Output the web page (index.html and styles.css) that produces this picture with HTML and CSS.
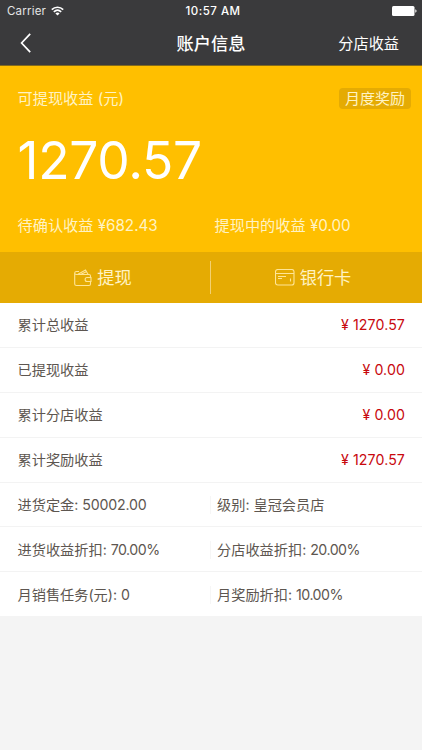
FILE: index.html
```html
<!DOCTYPE html>
<html lang="zh-CN">
<head>
<meta charset="utf-8">
<title>账户信息</title>
<link rel="stylesheet" href="styles.css">
</head>
<body>
<header class="top">
  <div class="status">
    <div class="carrier"><span>Carrier</span>
      <svg width="13" height="10" viewBox="0 0 13 10" fill="none" stroke="#fff" stroke-width="1.6"><path d="M.8 3.600C4 .4 9 .4 12.200 3.600M2.800 5.900C5 3.800 8 3.800 10.200 5.900"/><path d="M6.500 9.400L4.400 7.400C5.600 6.300 7.400 6.300 8.600 7.400Z" fill="#fff" stroke="none"/></svg>
    </div>
    <span class="clock">10:57 AM</span>
    <svg class="battery" width="25" height="10" viewBox="0 0 25 10" fill="#fff"><rect width="22.500" height="10" rx="1.500"/><path d="M23.300 3.300C25 3.800 25 6.200 23.300 6.700Z"/></svg>
  </div>
  <nav class="nav">
    <svg class="back" width="12" height="20" viewBox="0 0 12 20" fill="none" stroke="#fff" stroke-width="1.700"><path d="M10.200 .8L1.600 10L10.200 19.200"/></svg>
    <h1 class="title">账户信息</h1>
    <a class="branch">分店收益</a>
  </nav>
</header>
<section class="summary">
  <div class="summary-head"><span>可提现收益 (元)</span><span class="reward">月度奖励</span></div>
  <div class="amount">1270.57</div>
  <div class="pending"><span>待确认收益 ¥682.43</span><span>提现中的收益 ¥0.00</span></div>
</section>
<div class="actions">
  <a class="action">
    <svg width="18" height="18" viewBox="0 0 18 18" fill="none" stroke="#ffe596" stroke-width="1.100"><path d="M5 2.500H2.500Q.7 2.500 .7 4T2.500 5.500H15Q16.500 5.500 16.500 7V8.500M16.500 12.500V15Q16.500 16.500 15 16.500H2.500Q.7 16.500 .7 15V4M4 5.200L11.500 1L14 5.200M7 5.200L12.300 2.800M17 8.500H13C10.500 8.500 10.500 12.500 13 12.500H17Z"/></svg>
    <span>提现</span>
  </a>
  <a class="action card">
    <svg width="20" height="17" viewBox="0 0 20 17" fill="none" stroke="#ffe596" stroke-width="1.100"><rect x=".5" y=".5" width="18.500" height="15.500" rx="2.300"/><path d="M.6 4.500H19M3 7.500H11M3 9.500H7M15.500 9.500V12.500"/></svg>
    <span>银行卡</span>
  </a>
</div>
<main class="list">
  <div class="row"><span>累计总收益</span><span class="money">¥ 1270.57</span></div>
  <div class="row"><span>已提现收益</span><span class="money">¥ 0.00</span></div>
  <div class="row"><span>累计分店收益</span><span class="money">¥ 0.00</span></div>
  <div class="row"><span>累计奖励收益</span><span class="money">¥ 1270.57</span></div>
  <div class="row pair short"><span>进货定金: <span class="num">50002.00</span></span><span class="cell">级别: 皇冠会员店</span></div>
  <div class="row pair"><span>进货收益折扣: <span class="num percent">70.00%</span></span><span class="cell">分店收益折扣: <span class="num percent">20.00%</span></span></div>
  <div class="row pair short last"><span>月销售任务(元): <span class="num">0</span></span><span class="cell">月奖励折扣: <span class="num percent">10.00%</span></span></div>
</main>
</body>
</html>
```
FILE: styles.css
```css
* { box-sizing: border-box; }
body {
  margin: 0;
  background: #f4f4f4;
  color: #5d5650;
  font-family: Inter, "Noto Sans CJK SC", sans-serif;
  font-size: 14.2px;
  line-height: 20px;
  white-space: nowrap;
}
.top { height: 66px; background: #3a3a3c; color: #fff; border-bottom: 1px solid #836a1c; }
.status {
  display: grid;
  grid-template-columns: 1fr auto 1fr;
  align-items: center;
  height: 22px;
  padding: 0 5px 0 7px;
  font-size: 11.5px;
}
.carrier { display: flex; align-items: center; gap: 5px; color: #e4e4e4; letter-spacing: .2px; }
.clock { margin-left: 2px; font-weight: 500; font-size: 11.5px; letter-spacing: .5px; }
.battery { justify-self: end; }
.nav {
  display: grid;
  grid-template-columns: 1fr auto 1fr;
  align-items: center;
  height: 42px;
  padding: 0 23px 0 20px;
}
.title { margin: 2px 0 0 3px; font-size: 17.2px; font-weight: 500; }
.branch { justify-self: end; margin-top: 2px; font-size: 15.2px; }
.summary {
  height: 186px;
  padding: 22px 11px 0 17.5px;
  background: #ffbf00;
  color: #fff3c4;
  font-size: 15.2px;
}
.summary-head { display: flex; align-items: center; justify-content: space-between; height: 22px; }
.reward { height: 21px; margin-top: -2px; padding: 1px 6px 0; border-radius: 4px; background: #e5ab03; font-size: 15px; }
.amount { height: 60px; margin-top: 20px; color: #fff; font-size: 51.5px; font-weight: 400; letter-spacing: -.3px; line-height: 60px; }
.pending { display: grid; grid-template-columns: 197px 1fr; margin-top: 26px; font-size: 15.2px; }
.actions {
  display: flex;
  height: 51px;
  background: #e5ab03;
  color: #fff3c4;
  font-size: 17.2px;
}
.action { display: flex; width: 50%; align-items: center; justify-content: center; gap: 5px; padding-right: 5px; }
.card { position: relative; padding-right: 7px; }
.card::before { content: ""; position: absolute; left: -1px; top: 9px; width: 1px; height: 33px; background: #f3d171; }
.list { background: #fff; }
.row {
  display: flex;
  align-items: center;
  justify-content: space-between;
  height: 45px;
  padding: 0 17px 0 17.5px;
  border-bottom: 1px solid #f3f3f3;
}
.money { color: #c8080e; letter-spacing: .1px; }
.num { letter-spacing: -.2px; }
.percent { letter-spacing: -.5px; }
.pair { display: grid; grid-template-columns: 192.5px 1fr; padding-top: 1px; }
.short { height: 44px; }
.cell { padding-left: 6px; border-left: 1px solid #f6f6f6; line-height: 18px; }
.last { border-bottom: 0; }
```
